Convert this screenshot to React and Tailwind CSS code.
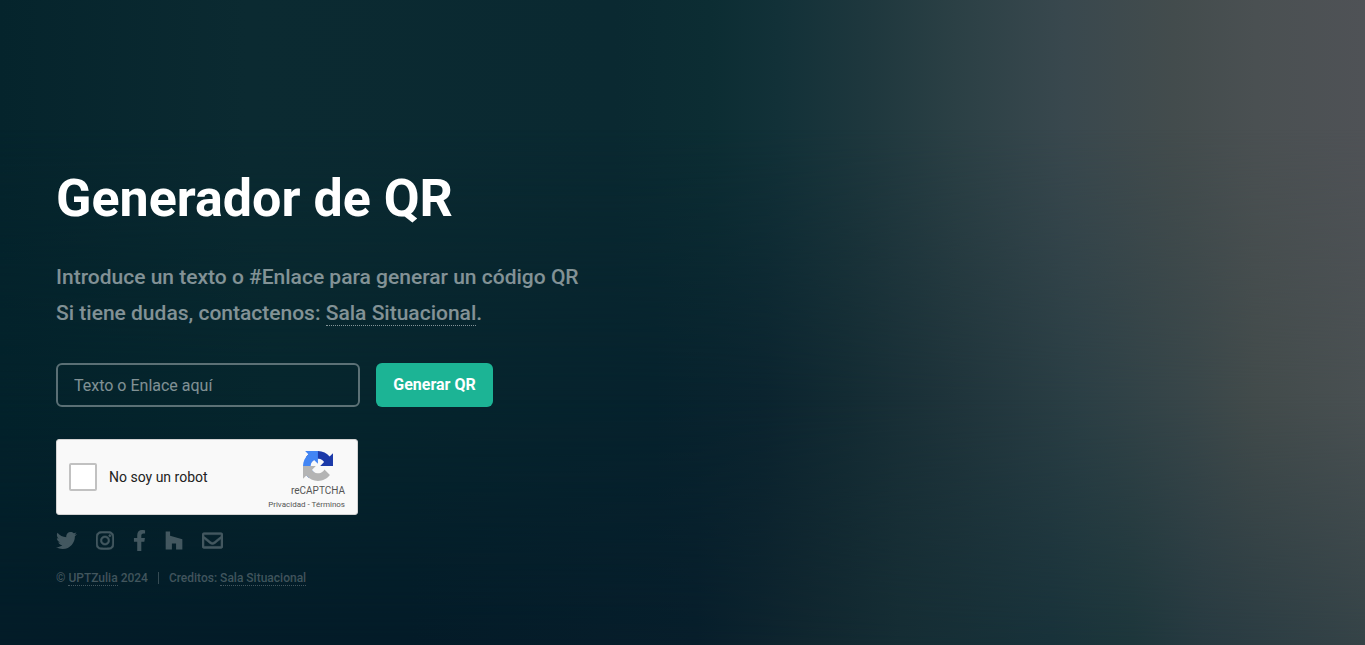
import { useState } from "react";
import {
  FaFacebookF,
  FaHouzz,
  FaInstagram,
  FaRegEnvelope,
  FaTwitter,
} from "react-icons/fa";

const socialLinks = [
  { name: "Twitter", icon: FaTwitter, width: "w-[21px]" },
  { name: "Instagram", icon: FaInstagram, width: "w-[18px]", stroke: 14 },
  { name: "Facebook", icon: FaFacebookF, width: "w-[13px]" },
  { name: "Houzz", icon: FaHouzz, width: "w-[18px]" },
  { name: "Email", icon: FaRegEnvelope, width: "w-[21px]", stroke: 14 },
];

function Background() {
  return (
    <div aria-hidden="true" className="absolute inset-0 -z-10">
      {/* Top */}
      <div className="absolute inset-0 bg-[linear-gradient(90deg,#05242c_0%,#0b2a31_18%,#0a2931_45%,#0c2d33_52%,#123138_57%,#1f383e_64%,#2b4045_70%,#39484e_78%,#434c4d_86%,#4a5052_92%,#4f5256_100%)]" />
      {/* Middle */}
      <div className="absolute inset-0 bg-[linear-gradient(90deg,#03222b_0%,#06262d_20%,#06222d_48%,#0b242f_56%,#132b33_62%,#1f343b_70%,#2b3f45_79%,#384649_87%,#424b4b_92%,#495052_100%)] [mask-image:linear-gradient(180deg,transparent_20%,black_62%)]" />
      {/* Bottom */}
      <div className="absolute inset-0 bg-[linear-gradient(90deg,#031c28_0%,#031b28_30%,#071e2b_51%,#10262f_59%,#152d34_66%,#18323a_77%,#1d363b_83%,#273a41_88%,#354347_100%)] [mask-image:linear-gradient(180deg,transparent_62%,black_100%)]" />
    </div>
  );
}

function RecaptchaLogo() {
  return (
    <svg viewBox="0 0 64 64" className="h-[30px] w-[30px]" aria-hidden="true">
      <path
        fill="#1C3AA9"
        d="M64 31.955l-.033-1.37V4.687l-7.16 7.16C50.948 4.674 42.033.093 32.05.093c-10.4 0-19.622 4.96-25.458 12.64l11.736 11.86a15.55 15.55 0 0 1 4.754-5.334c2.05-1.6 4.952-2.906 8.968-2.906.485 0 .86.057 1.135.163 4.976.393 9.288 3.14 11.828 7.124l-8.307 8.307L64 31.953"
      />
      <path
        fill="#4285F4"
        d="M31.862.094l-1.37.033H4.594l7.16 7.16C4.58 13.147 0 22.06 0 32.046c0 10.4 4.96 19.622 12.64 25.458L24.5 45.768a15.55 15.55 0 0 1-5.334-4.754c-1.6-2.05-2.906-4.952-2.906-8.968 0-.485.057-.86.163-1.135.393-4.976 3.14-9.288 7.124-11.828l8.307 8.307L31.86.095"
      />
      <path
        fill="#B4B4B4"
        d="M.001 32.045l.033 1.37v25.898l7.16-7.16c5.86 7.173 14.774 11.754 24.76 11.754 10.4 0 19.622-4.96 25.458-12.64l-11.736-11.86a15.55 15.55 0 0 1-4.754 5.334c-2.05 1.6-4.952 2.906-8.968 2.906-.485 0-.86-.057-1.135-.163-4.976-.393-9.288-3.14-11.828-7.124l8.307-8.307c-10.522.04-22.4.066-27.295-.005"
      />
    </svg>
  );
}

function Recaptcha() {
  return (
    <div className="flex h-[76px] w-[302px] items-center rounded-[3px] border border-[#d3d3d3] bg-[#f9f9f9] px-3">
      <label className="flex flex-1 items-center gap-3 text-sm text-[#222222]">
        <input
          type="checkbox"
          name="robot"
          className="h-7 w-7 appearance-none rounded-[2px] border-2 border-[#c1c1c1] bg-white checked:bg-[#1cb495]"
        />
        No soy un robot
      </label>
      <div className="flex flex-col items-end pt-1.5 text-[#555555]">
        <div className="flex flex-col items-center">
          <RecaptchaLogo />
          <span className="text-[10px] leading-5">reCAPTCHA</span>
        </div>
        <div className="text-[8px] leading-2">
          <a href="#privacidad">Privacidad</a>
          {" - "}
          <a href="#terminos">Términos</a>
        </div>
      </div>
    </div>
  );
}

export default function App() {
  const [text, setText] = useState("");

  const handleSubmit = (e) => {
    e.preventDefault();
  };

  return (
    <div className="relative isolate flex min-h-screen flex-col justify-end px-14 pb-[59px] font-['Roboto',sans-serif] text-white/50">
      <Background />

      <header>
        <h1 className="text-[52px] leading-[52px] font-bold text-white">
          Generador de QR
        </h1>
        <p className="mt-[34px] text-[21px] leading-9 font-medium">
          Introduce un texto o #Enlace para generar un código QR
          <br />
          Si tiene dudas, contactenos:{" "}
          <a href="#sala" className="border-b border-dotted border-white/50">
            Sala Situacional
          </a>
          .
        </p>
      </header>

      <form onSubmit={handleSubmit} className="mt-8">
        <div className="flex flex-wrap gap-4">
          <input
            type="text"
            name="texto"
            aria-label="Texto o Enlace"
            placeholder="Texto o Enlace aquí"
            value={text}
            onChange={(e) => setText(e.target.value)}
            className="h-11 w-[304px] rounded-md border-2 border-white/35 bg-transparent px-4 text-white outline-none placeholder:text-white/50 focus:border-[#1cb495]"
          />
          <button
            type="submit"
            className="h-11 w-[117px] rounded-md bg-[#1cb495] font-bold text-white hover:bg-[#1fcaa7]"
          >
            Generar QR
          </button>
        </div>
        <div className="mt-8">
          <Recaptcha />
        </div>
      </form>

      <footer className="mt-[15px]">
        <ul className="flex items-center gap-[19px] text-white opacity-25">
          {socialLinks.map(({ name, icon: Icon, width, stroke }) => (
            <li key={name}>
              <a href={`#${name.toLowerCase()}`} aria-label={name}>
                <Icon className={`h-[21px] ${width}`} strokeWidth={stroke || 0} />
              </a>
            </li>
          ))}
        </ul>
        <ul className="mt-[19px] flex items-center text-xs leading-4 font-medium text-white/25">
          <li>
            ©{" "}
            <a href="#uptzulia" className="border-b border-dotted border-white/25">
              UPTZulia
            </a>{" "}
            2024
          </li>
          <li className="ml-2.5 flex items-center">
            <span className="mr-2.5 h-3 w-px bg-white/20" />
            <span>
              Creditos:{" "}
              <a href="#creditos" className="border-b border-dotted border-white/25">
                Sala Situacional
              </a>
            </span>
          </li>
        </ul>
      </footer>
    </div>
  );
}
